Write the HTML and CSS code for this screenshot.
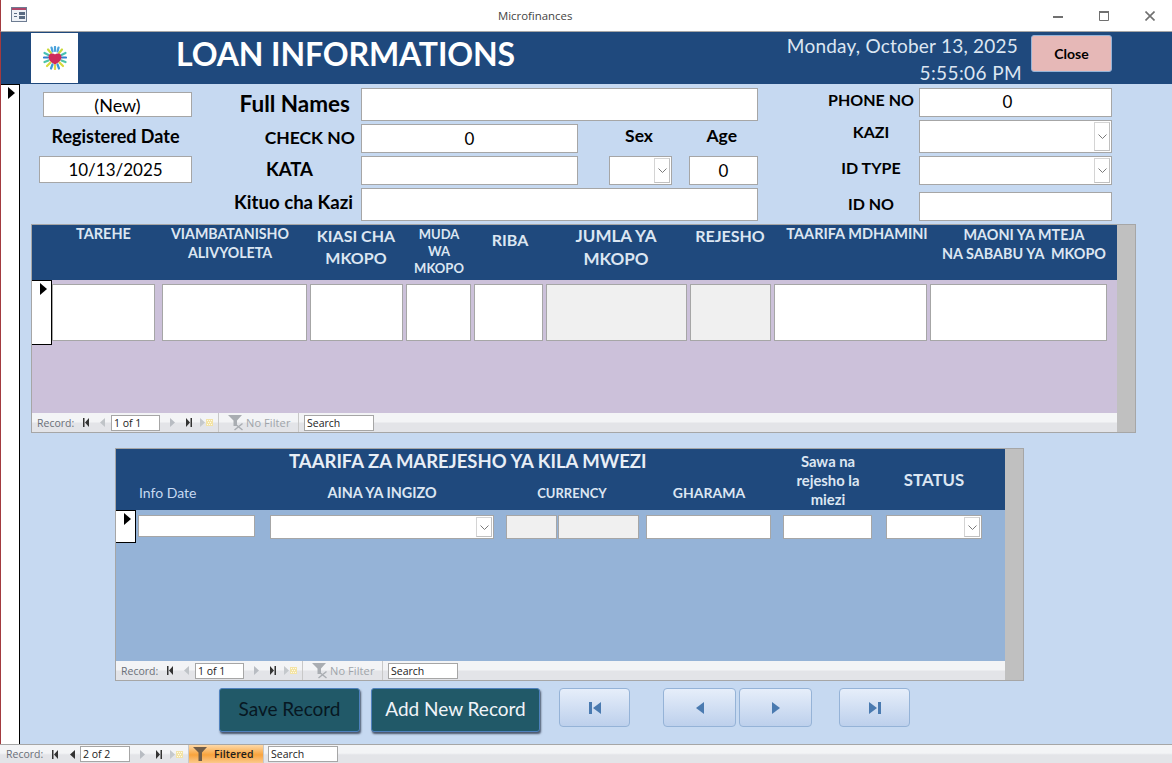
FILE: index.html
```html
<!DOCTYPE html>
<html lang="en">
<head>
<meta charset="utf-8">
<title>Microfinances</title>
<link rel="stylesheet" href="styles.css">
</head>
<body>
<svg class="defs" width="0" height="0" aria-hidden="true">
  <symbol id="i-first" viewBox="0 0 6 9"><path d="M0 0h1.500v9H0zM6 0v9L2 4.500z"/></symbol>
  <symbol id="i-prev" viewBox="0 0 5 9"><path d="M5 0v9L0 4.500z"/></symbol>
  <symbol id="i-next" viewBox="0 0 5 9"><path d="M0 0v9l5-4.500z"/></symbol>
  <symbol id="i-last" viewBox="0 0 6 9"><path d="M4.500 0H6v9H4.500zM0 0v9l4-4.500z"/></symbol>
  <symbol id="i-new" viewBox="0 0 13 9"><path d="M0 0v9l5-4.500z" fill="#c4c8cc"/><path d="M6 1h7v7H6z" fill="#f3e3a6"/><path d="M7 2h1v1H7zM9 2h1v1H9zM11 2h1v1h-1zM8 4h1v1H8zM10 4h1v1h-1zM7 6h1v1H7zM9 6h1v1H9zM11 6h1v1h-1z" fill="#fffbe6"/></symbol>
  <symbol id="i-funnel" viewBox="0 0 18 17"><path d="M1 1h14L10 6.500V15H6.500V6.500z"/></symbol>
  <symbol id="i-nofilter" viewBox="0 0 18 17"><path d="M1 1h14L10 6.500V12H6.500V6.500z"/><path d="M7.500 9.500l8 6.500M15.500 9.500l-8 6.500" stroke="#a9adb2" stroke-width="1.400" fill="none"/></symbol>
  <symbol id="i-chev" viewBox="0 0 9 5"><path d="M.5.500l4 4 4-4" fill="none" stroke="#7a7a7a"/></symbol>
</svg>
<div class="window">
  <header class="titlebar">
    <svg class="app-icon" width="16" height="15" viewBox="0 0 16 15"><rect x=".5" y=".5" width="15" height="14" fill="#eef1f6" stroke="#6d7c92"/><rect x="1" y="1" width="14" height="2" fill="#b0466a"/><path d="M3 6h3v1H3zM3 9h3v1H3zM8 5h6v3H8zM8 9h6v3H8z" fill="#5b6b82"/></svg>
    <span class="app-title">Microfinances</span>
    <div class="win-controls">
      <svg width="10" height="10" viewBox="0 0 10 10"><path d="M0 5h10v2H0z" fill="#707070"/></svg>
      <svg width="10" height="10" viewBox="0 0 10 10"><path d="M.5.500h9v9h-9z" fill="none" stroke="#707070"/><path d="M0 0h10v2H0z" fill="#707070"/></svg>
      <svg width="10" height="10" viewBox="0 0 10 10"><path d="M.5.500l9 9M9.500.500l-9 9" stroke="#707070" stroke-width="1.600"/></svg>
    </div>
  </header>
  <div class="form-header">
    <div class="logo">
      <svg width="24" height="24" viewBox="0 0 24 24">
        <g stroke-width="2.200" stroke-linecap="round">
          <path d="M12 1v4M15.500 1.500l-1 4M8.500 1.500l1 4" stroke="#4aa3dc"/>
          <path d="M19 3.500l-3 3.500M5 3.500l3 3.500" stroke="#c8d93a"/>
          <path d="M22.500 7l-4 2M1.500 7l4 2" stroke="#45c1b5"/>
          <path d="M23 11.500h-4M1 11.500h4" stroke="#2f7fcf"/>
          <path d="M22.500 16l-4-1.500M1.500 16l4-1.500" stroke="#4cc4a8"/>
          <path d="M20 20l-3.500-3.500M4 20l3.500-3.500" stroke="#d9d93a"/>
          <path d="M16 22.500l-1.500-4M8 22.500l1.500-4" stroke="#3a9ad9"/>
          <path d="M12 23v-4" stroke="#e3d94a"/>
        </g>
        <path d="M12 18.500c-3.500-2-6.500-4-6.500-7.500 0-2 1.200-3.500 3.300-3.500 1.400 0 2.500.4 3.200.9.700-.5 1.800-.9 3.200-.9 2.100 0 3.300 1.500 3.300 3.500 0 3.500-3 5.500-6.500 7.500z" fill="#cf2b5a"/>
      </svg>
    </div>
    <h1 class="form-title">LOAN INFORMATIONS</h1>
    <div class="clock">
      <span class="clock-date">Monday, October 13, 2025</span>
      <span class="clock-time">5:55:06 PM</span>
    </div>
    <button class="close-btn" type="button">Close</button>
  </div>
  <div class="form-main">
    <div class="record-selector"><svg class="sel-arrow" width="7" height="12" viewBox="0 0 7 12"><path d="M0 0l7 6-7 6z"/></svg></div>
    <main class="form-body">
      <section class="top">
        <div class="top-left">
          <div class="field field-new">(New)</div>
          <div class="lbl lbl-reg">Registered Date</div>
          <div class="field field-date">10/13/2025</div>
        </div>
        <div class="top-mid">
          <div class="lbl lbl-full">Full Names</div>
          <div class="field span-wide"></div>
          <div class="lbl lbl-check">CHECK NO</div>
          <div class="field field-num">0</div>
          <div class="lbl lbl-sex">Sex</div>
          <div class="lbl lbl-age">Age</div>
          <div class="lbl lbl-kata">KATA</div>
          <div class="field"></div>
          <div class="field combo col-sex"><span class="drop"><svg width="9" height="5"><use href="#i-chev"/></svg></span></div>
          <div class="field field-num col-age">0</div>
          <div class="lbl lbl-kituo">Kituo cha Kazi</div>
          <div class="field span-wide"></div>
        </div>
        <div class="top-right">
          <div class="lbl lbl-phone">PHONE NO</div>
          <div class="field field-num field-phone">0</div>
          <div class="lbl lbl-kazi">KAZI</div>
          <div class="field combo"><span class="drop"><svg width="9" height="5"><use href="#i-chev"/></svg></span></div>
          <div class="lbl lbl-idtype">ID TYPE</div>
          <div class="field combo"><span class="drop"><svg width="9" height="5"><use href="#i-chev"/></svg></span></div>
          <div class="lbl lbl-idno">ID NO</div>
          <div class="field field-idno"></div>
        </div>
      </section>

      <section class="subform subform-loan">
        <div class="sub-main">
          <div class="loan-head">
            <div class="lh lh-tarehe">TAREHE</div>
            <div class="lh lh-viam">VIAMBATANISHO<br>ALIVYOLETA</div>
            <div class="lh lh-kiasi">KIASI CHA<br>MKOPO</div>
            <div class="lh lh-muda">MUDA<br>WA<br>MKOPO</div>
            <div class="lh lh-riba">RIBA</div>
            <div class="lh lh-jumla">JUMLA YA<br>MKOPO</div>
            <div class="lh lh-rejesho">REJESHO</div>
            <div class="lh lh-mdh">TAARIFA MDHAMINI</div>
            <div class="lh lh-maoni">MAONI YA MTEJA<br>NA SABABU YA &nbsp;MKOPO</div>
          </div>
          <div class="loan-body">
            <div class="row-sel row-sel-loan"><svg class="row-arrow" width="7" height="12" viewBox="0 0 7 12"><path d="M0 0l7 6-7 6z"/></svg></div>
            <div class="cell c1"></div>
            <div class="cell c2"></div>
            <div class="cell c3"></div>
            <div class="cell c4"></div>
            <div class="cell c5"></div>
            <div class="cell c6 off"></div>
            <div class="cell c7 off"></div>
            <div class="cell c8"></div>
            <div class="cell c9"></div>
          </div>
          <div class="nav nav-sub">
            <span class="nav-label">Record:</span>
            <svg class="ni ni-first" width="6" height="9"><use href="#i-first"/></svg>
            <svg class="ni ni-prev dim" width="5" height="9"><use href="#i-prev"/></svg>
            <span class="nav-input nav-pos">1 of 1</span>
            <svg class="ni ni-next dim" width="5" height="9"><use href="#i-next"/></svg>
            <svg class="ni ni-last" width="6" height="9"><use href="#i-last"/></svg>
            <svg class="ni ni-new" width="13" height="9"><use href="#i-new"/></svg>
            <span class="nav-filter"><svg class="funnel" width="18" height="17"><use href="#i-nofilter"/></svg><span>No Filter</span></span>
            <span class="nav-input nav-search">Search</span>
          </div>
        </div>
        <div class="scroll"></div>
      </section>

      <section class="subform subform-pay">
        <div class="sub-main">
          <div class="pay-head">
            <div class="ph-title">TAARIFA ZA MAREJESHO YA KILA MWEZI</div>
            <div class="ph ph-info">Info Date</div>
            <div class="ph ph-aina">AINA YA INGIZO</div>
            <div class="ph ph-cur">CURRENCY</div>
            <div class="ph ph-gha">GHARAMA</div>
            <div class="ph ph-sawa">Sawa na<br>rejesho la<br>miezi</div>
            <div class="ph ph-status">STATUS</div>
          </div>
          <div class="pay-body">
            <div class="row-sel row-sel-pay"><svg class="row-arrow" width="7" height="12" viewBox="0 0 7 12"><path d="M0 0l7 6-7 6z"/></svg></div>
            <div class="cell p1"></div>
            <div class="cell p2 combo"><span class="drop"><svg width="9" height="5"><use href="#i-chev"/></svg></span></div>
            <div class="cell p3 off"></div>
            <div class="cell p4 off"></div>
            <div class="cell p5"></div>
            <div class="cell p6"></div>
            <div class="cell p7 combo"><span class="drop"><svg width="9" height="5"><use href="#i-chev"/></svg></span></div>
          </div>
          <div class="nav nav-sub">
            <span class="nav-label">Record:</span>
            <svg class="ni ni-first" width="6" height="9"><use href="#i-first"/></svg>
            <svg class="ni ni-prev dim" width="5" height="9"><use href="#i-prev"/></svg>
            <span class="nav-input nav-pos">1 of 1</span>
            <svg class="ni ni-next dim" width="5" height="9"><use href="#i-next"/></svg>
            <svg class="ni ni-last" width="6" height="9"><use href="#i-last"/></svg>
            <svg class="ni ni-new" width="13" height="9"><use href="#i-new"/></svg>
            <span class="nav-filter"><svg class="funnel" width="18" height="17"><use href="#i-nofilter"/></svg><span>No Filter</span></span>
            <span class="nav-input nav-search">Search</span>
          </div>
        </div>
        <div class="scroll"></div>
      </section>

      <section class="actions">
        <button class="dark-btn btn-save" type="button">Save Record</button>
        <button class="dark-btn btn-add" type="button">Add New Record</button>
        <button class="pale-btn pb-first" type="button"><svg width="12" height="12" viewBox="0 0 6 9" preserveAspectRatio="none"><use href="#i-first"/></svg></button>
        <button class="pale-btn pb-prev" type="button"><svg width="8" height="12" viewBox="0 0 5 9" preserveAspectRatio="none"><use href="#i-prev"/></svg></button>
        <button class="pale-btn pb-next" type="button"><svg width="8" height="12" viewBox="0 0 5 9" preserveAspectRatio="none"><use href="#i-next"/></svg></button>
        <button class="pale-btn pb-last" type="button"><svg width="12" height="12" viewBox="0 0 6 9" preserveAspectRatio="none"><use href="#i-last"/></svg></button>
      </section>
    </main>
  </div>
  <footer class="nav nav-main">
    <span class="nav-label">Record:</span>
    <svg class="ni ni-first" width="6" height="9"><use href="#i-first"/></svg>
    <svg class="ni ni-prev" width="5" height="9"><use href="#i-prev"/></svg>
    <span class="nav-input nav-pos">2 of 2</span>
    <svg class="ni ni-next dim" width="5" height="9"><use href="#i-next"/></svg>
    <svg class="ni ni-last" width="6" height="9"><use href="#i-last"/></svg>
    <svg class="ni ni-new" width="13" height="9"><use href="#i-new"/></svg>
    <span class="nav-filter filtered"><svg class="funnel" width="18" height="17"><use href="#i-funnel"/></svg><span>Filtered</span></span>
    <span class="nav-input nav-search">Search</span>
  </footer>
</div>
</body>
</html>
```

FILE: styles.css
```css
* { box-sizing: border-box; }
html, body { margin: 0; padding: 0; }
body { font-family: "Lato", "Open Sans", sans-serif; color: #000; overflow: hidden; }
.defs { position: absolute; }

.window { width: 1172px; height: 763px; display: flex; flex-direction: column; background: #c6d9f1; overflow: hidden; }

/* title bar */
.titlebar { height: 32px; flex: none; background: #fff; border-left: 1px solid #a33a3f; border-bottom: 1px solid #a6a6a6; display: flex; align-items: center; position: relative; }
.app-icon { margin-left: 10px; margin-bottom: 2px; }
.app-title { position: absolute; left: 497px; top: 9px; font: 11.400px/14px "Open Sans", sans-serif; color: #444; }
.win-controls { margin-left: auto; display: flex; gap: 36px; padding-right: 17px; }

/* form header */
.form-header { height: 52px; flex: none; background: #1f497d; border-left: 1px solid #a33a3f; display: flex; align-items: flex-start; padding-left: 30px; }
.logo { width: 47px; height: 50px; margin-top: 1px; background: #fff; display: flex; align-items: center; justify-content: center; }
.form-title { margin: 0 0 0 98px; width: 480px; font-size: 32px; line-height: 44px; font-weight: 700; color: #fff; white-space: nowrap; letter-spacing: -.12px; }
.clock { width: 240px; margin-left: 122px; display: flex; flex-direction: column; color: #dce6f2; font-size: 19px; line-height: 27px; align-items: flex-end; margin-top: 0; }
.clock-date { letter-spacing: .22px; white-space: nowrap; }
.clock-time { margin-right: -4px; letter-spacing: .4px; white-space: nowrap; }
.close-btn { width: 81px; height: 37px; margin: 3px 0 0 13px; background: #e6b8b7; border: 1px solid #95b3d7; border-radius: 3px; font: 700 14px "Lato", sans-serif; color: #000; padding: 0; }

/* form */
.form-main { flex: 1; display: flex; min-height: 0; border-left: 1px solid #a33a3f; }
.record-selector { width: 19px; flex: none; background: #fff; border-right: 1px solid #000; border-top: 1px solid #000; padding: 2px 0 0 7px; }
.sel-arrow, .row-arrow { display: block; }
.form-body { flex: 1; min-width: 0; }

.top { display: flex; height: 137px; padding-top: 4px; }
.lbl { font-weight: 700; font-size: 16px; line-height: 20px; white-space: nowrap; }
.field { background: #fff; border: 1px solid #a6a6a6; font-size: 16px; display: flex; align-items: center; justify-content: center; position: relative; }
.field-num { font-size: 17px; }

.top-left { width: 172px; padding: 4px 0 0 19px; display: flex; flex-direction: column; align-items: flex-end; }
.field-new { width: 149px; height: 25px; font-size: 18px; }
.lbl-reg { width: 153px; text-align: center; margin-top: 9px; font-size: 18px; }
.field-date { width: 153px; height: 27px; margin-top: 10px; font-size: 17px; }

.top-mid { width: 566px; display: grid; grid-template-columns: 169px 217px 31px 63px 17px 69px; grid-template-rows: 33px 29px 29px 33px; row-gap: 3px; }
.span-wide { grid-column: 2 / 7; }
.col-sex { grid-column: 4; }
.col-age { grid-column: 6; }
.lbl-full { justify-self: end; margin-right: 11px; align-self: center; font-size: 22.500px; margin-bottom: 1px; }
.lbl-check { grid-column: 1; justify-self: end; margin-right: 6px; align-self: center; font-size: 17.500px; margin-bottom: 2px; }
.lbl-sex { grid-column: 3 / 5; justify-self: end; margin-right: 19px; align-self: center; font-size: 17.500px; margin-bottom: 5px; }
.lbl-age { grid-column: 5 / 7; justify-self: end; margin-right: 21px; align-self: center; font-size: 17.500px; margin-bottom: 5px; }
.lbl-kata { grid-column: 1; justify-self: end; margin-right: 48px; align-self: center; font-size: 18.600px; margin-bottom: 4px; }
.lbl-kituo { grid-column: 1; justify-self: end; margin-right: 8px; align-self: center; font-size: 18.600px; margin-bottom: 6px; }

.top-right { margin-left: 69px; width: 285px; display: grid; grid-template-columns: 88px 193px; column-gap: 4px; grid-template-rows: 29px 33px 29px 33px; row-gap: 3px; }
.top-right .lbl { justify-self: center; align-self: center; }
.lbl-phone { margin-bottom: 6px; }
.lbl-kazi { margin-bottom: 9px; }
.lbl-idtype { margin-bottom: 6px; }
.lbl-idno { margin-bottom: 2px; }
.field-phone { padding-right: 16px; padding-bottom: 2px; }
.field-idno { height: 29px; align-self: end; }

.combo { justify-content: flex-start; }
.drop { position: absolute; right: 1px; top: 1px; bottom: 1px; width: 16px; background: #fff; border: 1px solid #d4d4d4; border-right-color: #c0c0c0; border-bottom-color: #c0c0c0; display: flex; align-items: center; justify-content: center; }
.drop svg { display: block; }

/* subforms */
.subform { display: flex; border: 1px solid #a6a6a6; background: #c0c0c0; }
.sub-main { flex: 1; min-width: 0; display: flex; flex-direction: column; }
.scroll { width: 18px; flex: none; background: #c0c0c0; }

.subform-loan { margin: 3px 0 0 11px; width: 1105px; height: 209px; }
.loan-head { height: 55px; background: #1f497d; display: grid; grid-template-columns: 20px 103px 150px 102px 64px 78px 134px 94px 160px 174px; color: #dce6f2; font-weight: 700; }
.lh { text-align: center; white-space: nowrap; }
.lh-tarehe { grid-column: 2; font-size: 14.500px; line-height: 18px; }
.lh-viam { font-size: 14.200px; line-height: 19px; margin-top: -1px; }
.lh-kiasi { font-size: 16px; line-height: 22px; }
.lh-muda { font-size: 13px; line-height: 17px; padding-top: 1px; }
.lh-riba { font-size: 16px; line-height: 22px; padding-top: 4px; }
.lh-jumla { font-size: 17px; line-height: 23px; margin-top: -1px; }
.lh-rejesho { font-size: 16px; line-height: 22px; }
.lh-mdh { font-size: 14.500px; line-height: 18px; }
.lh-maoni { font-size: 14.400px; line-height: 19px; }

.loan-body { height: 133px; background: #ccc1da; display: flex; column-gap: 3px; align-items: flex-start; }
.row-sel { background: #fff; border: 1px solid #000; border-left: 0; width: 20px; padding: 2px 0 0 8px; flex: none; }
.row-sel-loan { height: 65px; }
.cell { background: #fff; border: 1px solid #a6a6a6; flex: none; position: relative; }
.off { background: #f0f0f0; }
.loan-body .cell { height: 57px; margin-top: 4px; }
.c1 { width: 103px; margin-left: -3px; }
.c2 { width: 145px; margin-left: 4px; }
.c3 { width: 93px; }
.c4 { width: 65px; }
.c5 { width: 69px; }
.c6 { width: 141px; }
.c7 { width: 81px; }
.c8 { width: 153px; }
.c9 { width: 177px; }

.subform-pay { margin: 15px 0 0 95px; width: 909px; height: 233px; }
.pay-head { height: 61px; background: #1f497d; display: grid; grid-template-columns: 154px 224px 156px 118px 120px 92px; grid-template-rows: 26px 35px; color: #dce6f2; font-weight: 700; }
.ph { text-align: center; white-space: nowrap; align-self: center; }
.ph-title { grid-column: 2 / 7; grid-row: 1; padding: 1px 0 0 19px; font-size: 18.500px; line-height: 22px; color: #e8eef6; white-space: nowrap; }
.ph-info { grid-column: 1; grid-row: 2; text-align: left; padding-left: 23px; font-weight: 400; font-size: 14px; color: #c6d9f1; }
.ph-aina { grid-column: 2; grid-row: 2; font-size: 14.400px; }
.ph-cur { grid-column: 3; grid-row: 2; font-size: 13px; }
.ph-gha { grid-column: 4; grid-row: 2; font-size: 14px; }
.ph-sawa { grid-column: 5; grid-row: 1 / 3; font-size: 14.800px; line-height: 19px; padding-top: 2px; }
.ph-status { grid-column: 6; grid-row: 1 / 3; font-size: 16.800px; }

.pay-body { height: 151px; background: #95b3d7; display: flex; align-items: flex-start; }
.row-sel-pay { height: 33px; }
.pay-body .cell { height: 24px; margin-top: 5px; }
.pay-body .p1 { width: 117px; margin-left: 2px; height: 22px; }
.p2 { width: 224px; margin-left: 15px; }
.p3 { width: 51px; margin-left: 12px; }
.p4 { width: 81px; margin-left: 1px; }
.p5 { width: 125px; margin-left: 7px; }
.p6 { width: 89px; margin-left: 12px; }
.p7 { width: 96px; margin-left: 14px; }

/* record navigator */
.nav { display: flex; align-items: center; background: linear-gradient(#f3f4f6 0 45%, #e3e4e8 55%); font: 10.500px "Open Sans", sans-serif; color: #6a6f78; }
.nav-sub { height: 19px; padding-left: 5px; }
.nav-main { height: 19px; flex: none; padding-left: 6px; border-top: 1px solid #a6a6a6; }
.nav-label { width: 39px; white-space: nowrap; }
.ni { flex: none; fill: #333; display: block; }
.ni.dim { fill: #b8bcc2; }
.ni-first { margin-left: 7px; }
.ni-prev { margin-left: 11px; }
.ni-prev.dim { fill: #c0c4c8; }
.nav-input { background: #fff; border: 1px solid #a6a6a6; height: 16px; color: #222; display: flex; align-items: center; padding-left: 2px; line-height: 12px; }
.nav-pos { width: 49px; margin-left: 6px; }
.ni-next { margin-left: 10px; }
.ni-last { margin-left: 11px; }
.ni-new { margin-left: 8px; }
.nav-filter { display: flex; align-items: center; height: 100%; width: 81px; margin-left: 5px; padding-left: 8px; border-left: 1px solid #c8c8c8; border-right: 1px solid #c8c8c8; color: #a0a4aa; font-size: 11px; letter-spacing: .1px; white-space: nowrap; }
.funnel { fill: #a9adb2; width: 18px; height: 17px; flex: none; margin-right: 1px; }
.nav-search { width: 70px; margin-left: 5px; }
.nav-main .ni-first { margin-left: 7px; }
.nav-main .ni-prev { margin-left: 12px; }
.nav-main .nav-pos { width: 50px; margin-left: 5px; }
.nav-main .ni-new { margin-left: 8px; }
.nav-main .nav-filter.filtered { width: 76px; margin-left: 5px; padding-left: 3px; height: 18px; background: linear-gradient(#fdd9a8, #f9a33c 55%, #fbc98c); color: #1f1f1f; border-color: #c8c8c8; font-weight: 600; font-size: 10.500px; }
.filtered .funnel { fill: #6e5c4a; margin-right: 4px; }
.nav-main .nav-search { margin-left: 4px; }

/* bottom buttons */
.actions { display: flex; align-items: flex-start; padding: 7px 0 0 199px; }
.dark-btn { height: 44px; background: #215968; border: 1px solid #4f81bd; border-radius: 3px; box-shadow: 1px 2px 2px rgba(20,30,50,.7); font: 19px "Lato", sans-serif; padding: 0 0 4px; }
.btn-save { width: 141px; color: #071722; }
.btn-add { width: 169px; margin-left: 11px; color: #f0f4f8; }
.pale-btn { height: 39px; background: linear-gradient(#e6eefa, #bdd0ec); border: 1px solid #95b3d7; border-radius: 4px; padding: 0; display: flex; align-items: center; justify-content: center; }
.pale-btn svg { fill: #4a7ab0; display: block; }
.pb-first { width: 71px; margin-left: 19px; }
.pb-prev { width: 73px; margin-left: 33px; }
.pb-next { width: 73px; margin-left: 3px; }
.pb-last { width: 71px; margin-left: 27px; }
```
